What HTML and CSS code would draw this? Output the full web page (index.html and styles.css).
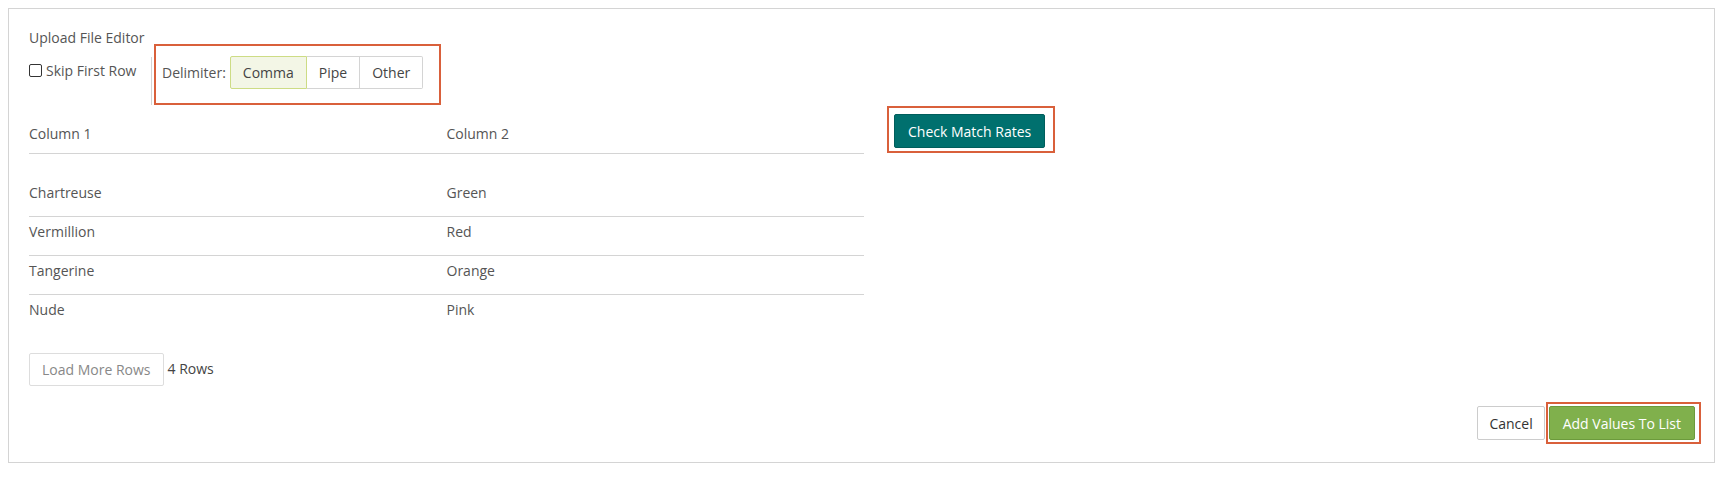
FILE: index.html
```html
<!DOCTYPE html>
<html lang="en">
<head>
    <meta charset="UTF-8">
    <title>Upload File Editor</title>
    <link rel="stylesheet" href="styles.css">
</head>
<body>

    <div class="panel">
        <div class="title">Upload File Editor</div>

        <div class="toolbar">
            <label class="skip">
                <span class="checkbox"></span>
                Skip First Row
            </label>
            <div class="delimiter-section">
                <div class="highlight delimiter-box">
                    <span class="delimiter-label">Delimiter:</span>
                    <div class="btn-group">
                        <button class="seg active">Comma</button>
                        <button class="seg">Pipe</button>
                        <button class="seg">Other</button>
                    </div>
                </div>
            </div>
        </div>

        <div class="main">
            <table class="preview">
                <thead>
                    <tr><th>Column 1</th><th>Column 2</th></tr>
                </thead>
                <tbody>
                    <tr class="spacer"><td colspan="2"></td></tr>
                    <tr><td>Chartreuse</td><td>Green</td></tr>
                    <tr><td>Vermillion</td><td>Red</td></tr>
                    <tr><td>Tangerine</td><td>Orange</td></tr>
                    <tr><td>Nude</td><td>Pink</td></tr>
                </tbody>
            </table>

            <div class="side">
                <div class="highlight check-box">
                    <button class="btn btn-teal">Check Match Rates</button>
                </div>
            </div>
        </div>

        <div class="more">
            <button class="btn btn-light">Load More Rows</button>
            <span class="count">4 Rows</span>
        </div>

        <div class="footer">
            <button class="btn btn-default">Cancel</button>
            <div class="highlight add-box">
                <button class="btn btn-green">Add Values To List</button>
            </div>
        </div>
    </div>

</body>
</html>
```

FILE: styles.css
```css
body {
    margin: 0;
    font-family: "Open Sans", Arial, sans-serif;
    font-size: 14px;
    color: #555;
    background: #fff;
}
.panel {
    margin: 8px 12px 0 8px;
    height: 455px;
    box-sizing: border-box;
    border: 1px solid #d4d4d4;
    padding: 19px 13px 0 20px;
    display: flex;
    flex-direction: column;
}
.title {
    line-height: 20px;
}
.toolbar {
    display: flex;
    margin-top: -4px;
}
.skip {
    display: flex;
    align-items: center;
    gap: 4px;
    height: 20px;
    margin-top: 16px;
    width: 122px;
}
.checkbox {
    width: 11px;
    height: 11px;
    border: 1px solid #333;
    border-radius: 2px;
}
.delimiter-section {
    border-left: 1px solid #d4d4d4;
    margin-top: 13px;
    padding-left: 2px;
    height: 48px;
    display: flex;
    align-items: flex-start;
}
.highlight {
    border: 2px solid #d9603b;
}
.delimiter-box {
    margin-top: -13px;
    display: flex;
    align-items: center;
    padding: 10px 16px 14px 6px;
}
.delimiter-label {
    margin-right: 4px;
}
.btn-group {
    display: flex;
}
.seg {
    font-family: inherit;
    font-size: 14px;
    color: #444;
    background: #fff;
    border: 1px solid #d4d4d4;
    border-left: none;
    height: 33px;
    padding: 0 12px;
}
.seg:first-child {
    border-left: 1px solid #d4d4d4;
    border-radius: 2px 0 0 2px;
}
.seg:last-child {
    border-radius: 0 2px 2px 0;
}
.seg.active {
    background: #f3f6e6;
    border-color: #cddc85;
    padding: 0 12px;
}
.main {
    display: flex;
    align-items: flex-start;
}
.preview {
    width: 835px;
    border-collapse: collapse;
}
.preview th {
    text-align: left;
    font-weight: normal;
    line-height: 20px;
    padding: 19px 0 9px;
    width: 50%;
    border-bottom: 1px solid #d4d4d4;
}
.preview td {
    line-height: 20px;
    padding: 5px 0 13px;
}
.preview tbody tr + tr + tr td {
    border-top: 1px solid #d4d4d4;
}
.preview .spacer td {
    padding: 0;
    height: 24px;
}
.side {
    margin-left: 23px;
    margin-top: 1px;
}
.check-box {
    padding: 6px 8px 3px 5px;
}
.btn {
    font-family: inherit;
    font-size: 14px;
    height: 34px;
    padding: 0 12px;
    border-radius: 2px;
    border: 1px solid #ccc;
    background: #fff;
    color: #444;
}
.btn-teal {
    background: #00706e;
    border-color: #005e5c;
    color: #fff;
    padding: 0 13px;
}
.more {
    display: flex;
    align-items: center;
    gap: 4px;
    margin-top: 20px;
}
.btn-light {
    color: #888;
    border-color: #ddd;
    height: 33px;
    padding: 0 12px;
}
.count {
    color: #444;
    margin-top: -3px;
}
.footer {
    display: flex;
    justify-content: flex-end;
    align-items: center;
    margin-top: 16px;
}
.btn-default {
    color: #333;
    padding: 0 11px;
}
.add-box {
    margin-left: 1px;
    padding: 2px 4px 2px 1px;
}
.btn-green {
    background: #80b04c;
    border-color: #6c9a3c;
    color: #fff;
    padding: 0 13px;
}
```
